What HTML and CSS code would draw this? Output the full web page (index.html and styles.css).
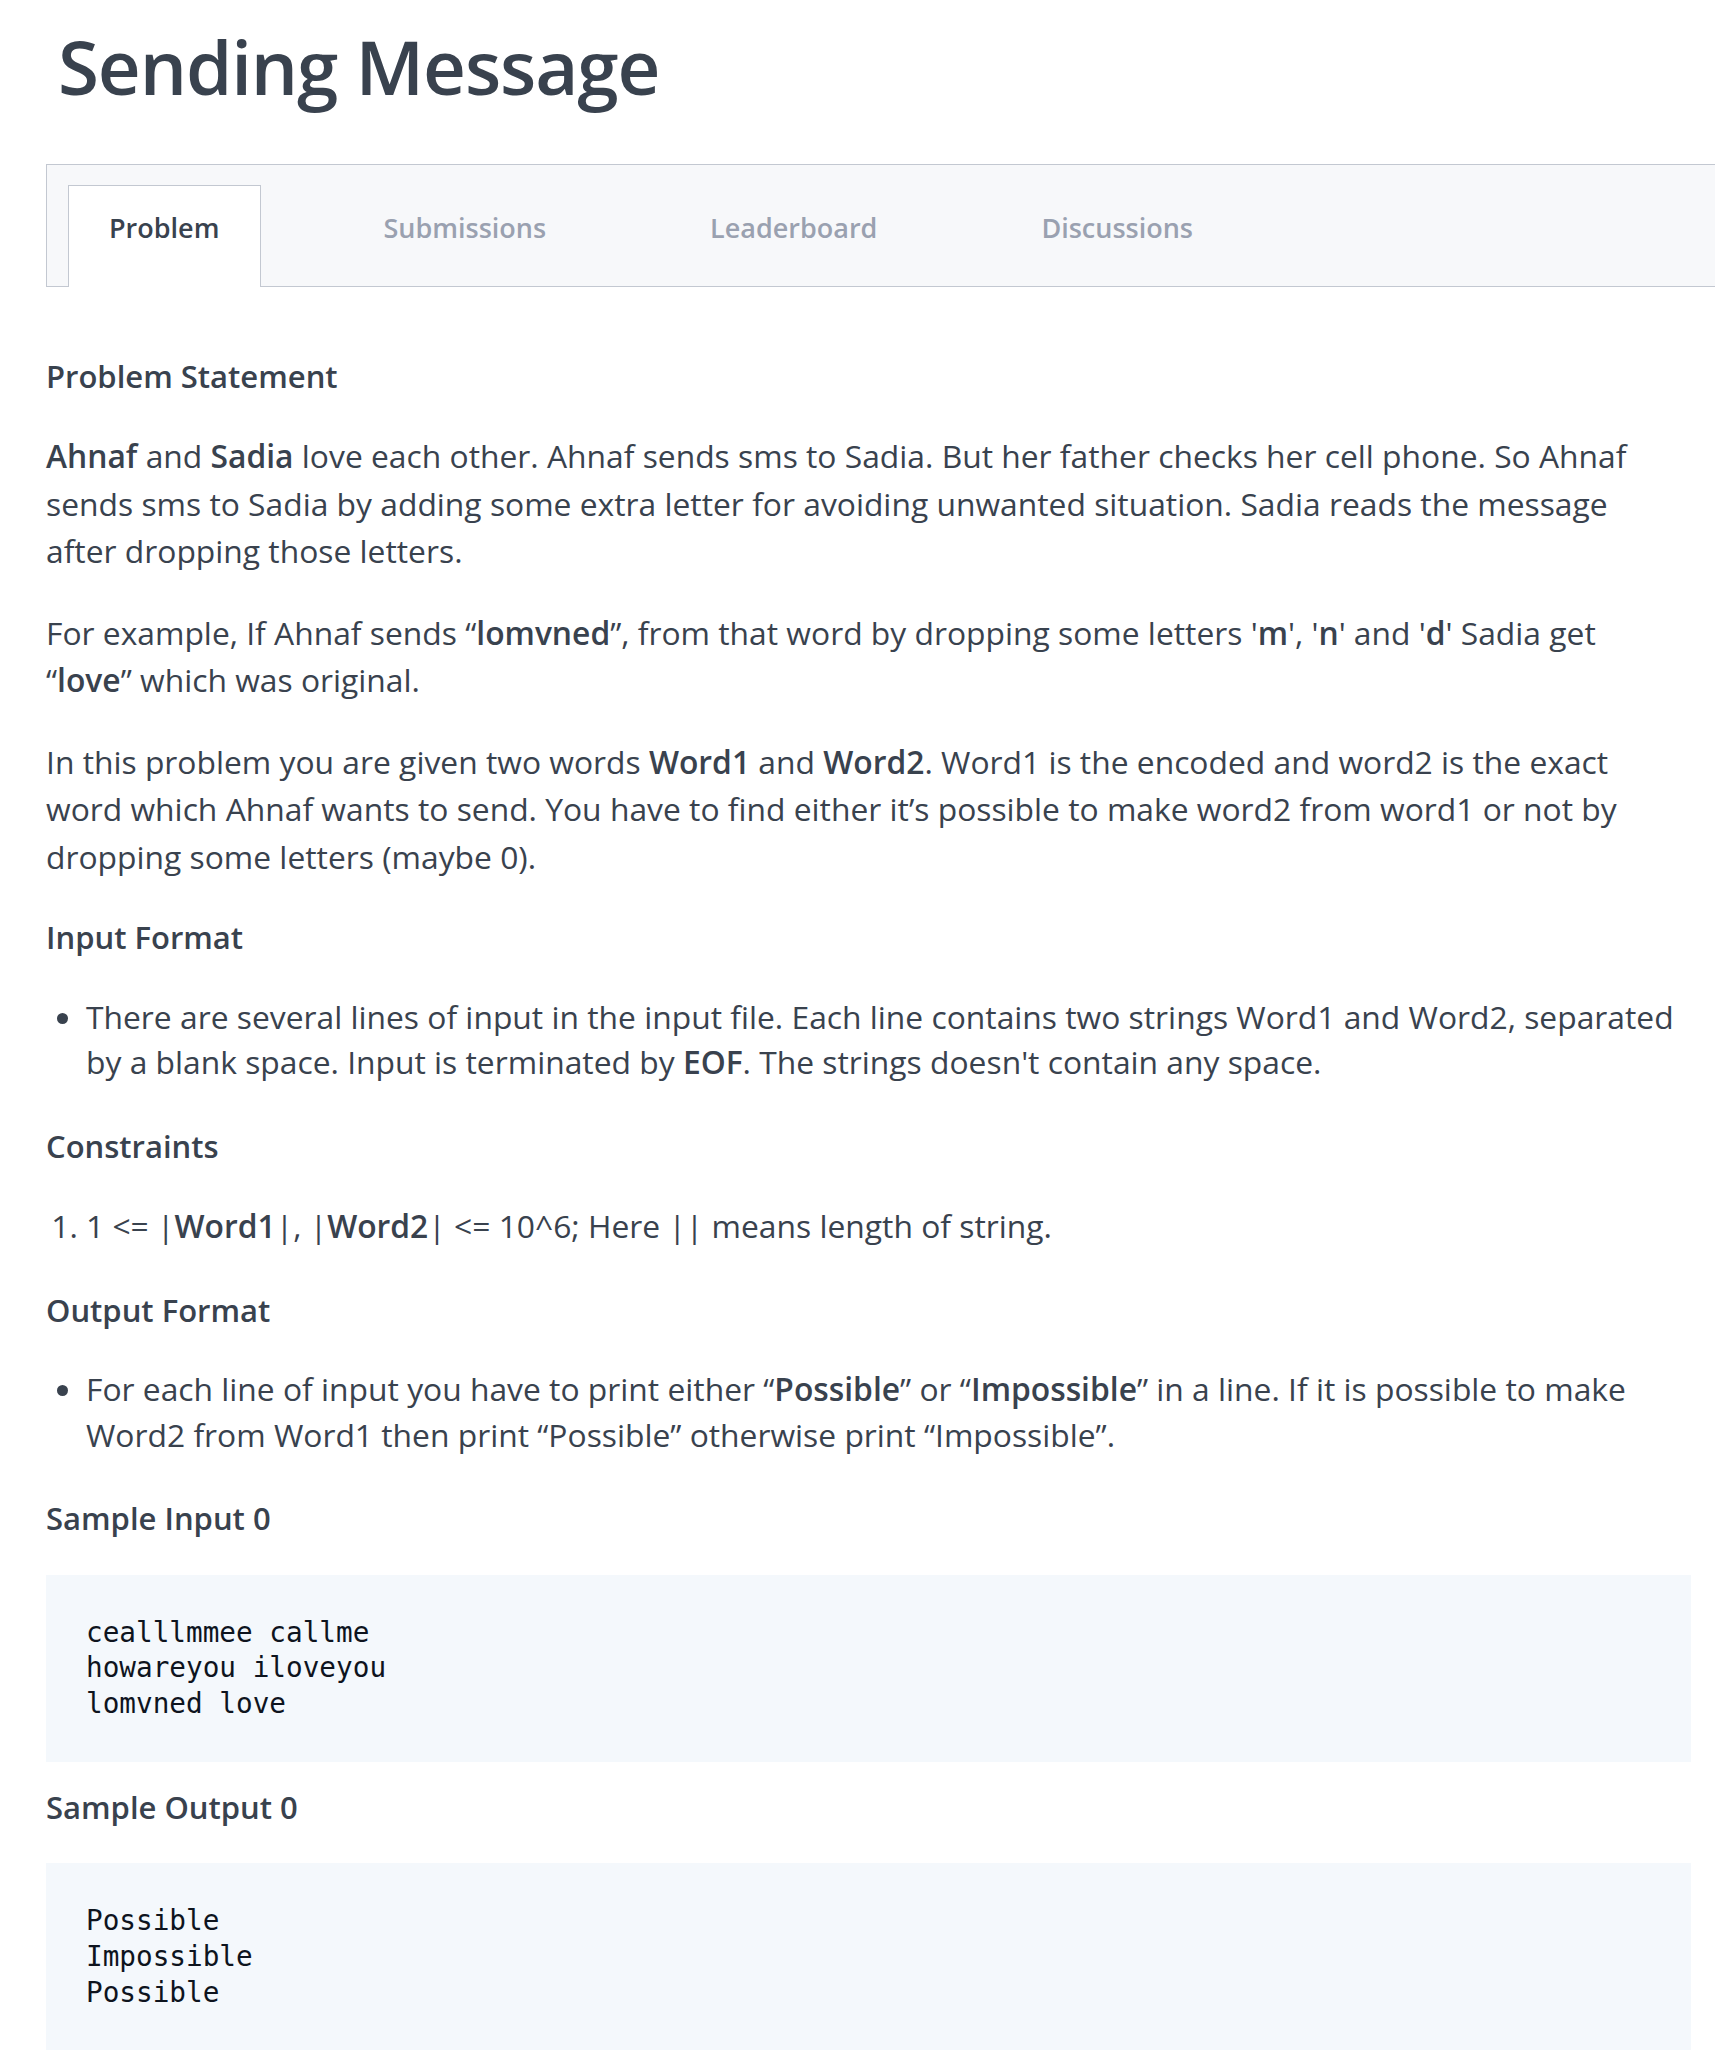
FILE: index.html
```html
<!DOCTYPE html>
<html lang="en">
<head>
<meta charset="utf-8">
<title>Sending Message</title>
<link rel="stylesheet" href="styles.css">
</head>
<body>
<div class="page">
  <h1 class="title">Sending Message</h1>
  <nav class="tabs">
    <a class="tab tab-active">Problem</a>
    <a class="tab">Submissions</a>
    <a class="tab">Leaderboard</a>
    <a class="tab">Discussions</a>
  </nav>
  <div class="statement">
    <h2 class="heading">Problem Statement</h2>
    <p class="para"><strong>Ahnaf</strong> and <strong>Sadia</strong> love each other. Ahnaf sends sms to Sadia. But her father checks her cell phone. So Ahnaf sends sms to Sadia by adding some extra letter for avoiding unwanted situation. Sadia reads the message after dropping those letters.</p>
    <p class="para">For example, If Ahnaf sends “<strong>lomvned</strong>”, from that word by dropping some letters '<strong>m</strong>', '<strong>n</strong>' and '<strong>d</strong>' Sadia get “<strong>love</strong>” which was original.</p>
    <p class="para">In this problem you are given two words <strong>Word1</strong> and <strong>Word2</strong>. Word1 is the encoded and word2 is the exact word which Ahnaf wants to send. You have to find either it’s possible to make word2 from word1 or not by dropping some letters (maybe 0).</p>
    <h2 class="heading">Input Format</h2>
    <ul class="bullets">
      <li>There are several lines of input in the input file. Each line contains two strings Word1 and Word2, separated by a blank space. Input is terminated by <strong>EOF</strong>. The strings doesn't contain any space.</li>
    </ul>
    <h2 class="heading">Constraints</h2>
    <ol class="numbers">
      <li>1 &lt;= |<strong>Word1</strong>|, |<strong>Word2</strong>| &lt;= 10^6; Here || means length of string.</li>
    </ol>
    <h2 class="heading">Output Format</h2>
    <ul class="bullets">
      <li>For each line of input you have to print either “<strong>Possible</strong>” or “<strong>Impossible</strong>” in a line. If it is possible to make Word2 from Word1 then print “Possible” otherwise print “Impossible”.</li>
    </ul>
    <h2 class="heading">Sample Input 0</h2>
    <pre class="code">cealllmmee callme
howareyou iloveyou
lomvned love</pre>
    <h2 class="heading">Sample Output 0</h2>
    <pre class="code">Possible
Impossible
Possible</pre>
  </div>
</div>
</body>
</html>
```
FILE: styles.css
```css
html, body {
  margin: 0;
  padding: 0;
  background: #ffffff;
  overflow-x: hidden;
}

body {
  font-family: "Open Sans", "Noto Sans", sans-serif;
  color: #39424e;
}

.page {
  padding: 0 24px 0 46px;
}

.title {
  margin: 19px 0 51px 12px;
  font-size: 74.5px;
  line-height: 94px;
  font-weight: 600;
  letter-spacing: -1.1px;
  color: #39424e;
}

.tabs {
  display: flex;
  align-items: flex-end;
  gap: 81px;
  height: 101px;
  margin-right: -24px;
  padding: 20px 0 0 21px;
  background: #f7f8fa;
  border: 1px solid #c3c8d1;
  border-right: none;
}

.tab {
  box-sizing: border-box;
  height: 102px;
  margin-bottom: -1px;
  padding: 22px 41px 0 40px;
  font-size: 27px;
  line-height: 40px;
  font-weight: 600;
  color: #9aa1b0;
  border: 1px solid transparent;
  border-bottom: none;
}

.tab-active {
  background: #ffffff;
  border-color: #c3c8d1;
  color: #39424e;
}

.statement {
  padding-top: 65.5px;
  font-size: 31.8px;
  line-height: 47.5px;
}

.heading {
  margin: 0 0 32px;
  font-size: 31px;
  line-height: 47.5px;
  font-weight: 600;
}

.para {
  margin: 0 10px 34px 0;
}

strong {
  font-weight: 600;
}

.bullets {
  margin: 0 10px 38px 0;
  padding-left: 40px;
  line-height: 45.5px;
}

.numbers {
  margin: 0 10px 37px 0;
  padding-left: 40px;
}

.code {
  margin: 0 0 22px;
  padding: 40px;
  background: #f4f8fc;
  font-family: "DejaVu Sans Mono", "Liberation Mono", monospace;
  font-size: 27.7px;
  line-height: 35.7px;
  color: #0e141e;
}
```
